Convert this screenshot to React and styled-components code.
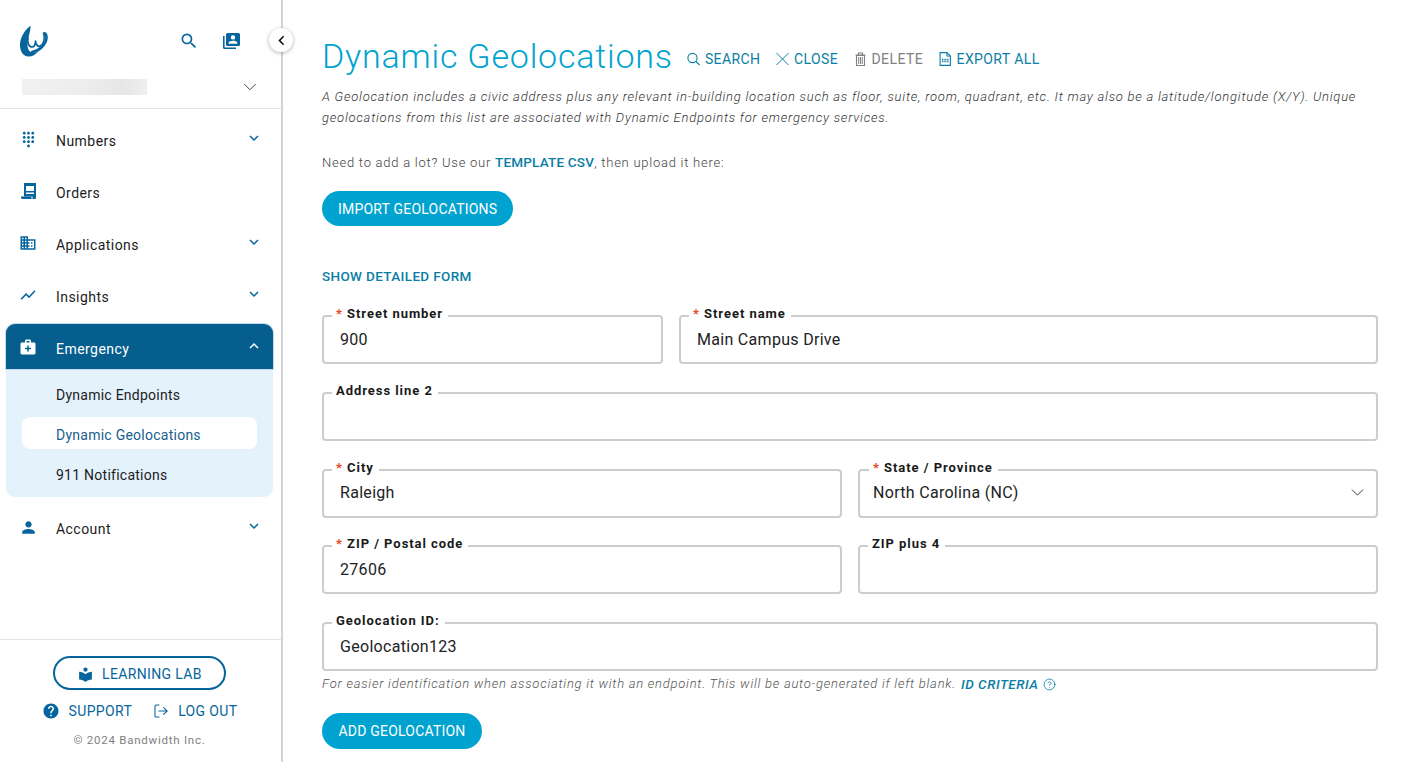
import styled, { createGlobalStyle } from 'styled-components';
import {
  MdSearch, MdDialpad, MdDomain, MdShowChart, MdMedicalServices, MdPerson,
  MdKeyboardArrowDown, MdKeyboardArrowUp, MdChevronLeft, MdHelp, MdLocalLibrary,
} from 'react-icons/md';
import { ChevronDown, LogOut, CircleHelp } from 'lucide-react';

const navy = '#06659c';
const teal = '#0a7ea4';
const sky = '#00a3d0';
const line = '#cdcdcd';

const GlobalStyle = createGlobalStyle`
  html, body { margin: 0; padding: 0; height: 100%; background: #fff; overflow: hidden; }
  body { font-family: Roboto, "Liberation Sans", sans-serif; color: #1c1c1c; }
  * { box-sizing: border-box; }
`;

const Page = styled.div`
  display: flex;
  width: 1416px;
  height: 762px;
`;

const Sidebar = styled.aside`
  position: relative;
  width: 283px;
  flex: none;
  height: 100%;
  display: flex;
  flex-direction: column;
  border-right: 2px solid #d4d4d4;
`;

const Brand = styled.div`
  height: 109px;
  flex: none;
  border-bottom: 1px solid #e4e4e4;
  padding: 24px 24px 0 20px;
`;

const BrandTop = styled.div`
  display: flex;
  align-items: center;
  height: 34px;
  color: ${navy};
`;

const BrandIcons = styled.div`
  margin-left: auto;
  margin-right: 17px;
  display: flex;
  align-items: center;
  gap: 24px;
`;

const AccountPicker = styled.div`
  display: flex;
  align-items: center;
  justify-content: space-between;
  margin: 21px -4px 0 2px;
  height: 16px;
  color: #333;
`;

const BlurredName = styled.div`
  width: 125px;
  height: 16px;
  background: linear-gradient(90deg, #f1f1f1, #ededed 50%, #e6e6e6 80%, #efefef);
  filter: blur(0.6px);
`;

const CollapseButton = styled.button`
  position: absolute;
  top: 28px;
  right: -12px;
  width: 24px;
  height: 24px;
  padding: 0;
  border: 0;
  border-radius: 50%;
  background: #fff;
  color: #111;
  box-shadow: 0 1px 4px rgba(0, 0, 0, 0.3);
  display: flex;
  align-items: center;
  justify-content: center;
  z-index: 2;
`;

const Nav = styled.nav`
  flex: 1;
  padding: 6px 8px 0 6px;
`;

const NavRow = styled.div`
  height: 52px;
  display: flex;
  align-items: center;
  padding: 0 10px 0 14px;
  font-size: 14px;
  letter-spacing: 0.45px;
  color: #1c1c1c;
  svg { color: ${navy}; flex: none; }
`;

const AccountRow = styled(NavRow)`
  margin-top: 6px;
`;

const NavIcon = styled.span`
  width: 16px;
  height: 16px;
  margin-right: 20px;
  margin-top: -4px;
  display: flex;
  align-items: center;
  justify-content: center;
`;

const NavChevron = styled.span`
  margin-left: auto;
  margin-top: -6px;
  display: flex;
`;

const EmergencyGroup = styled.div`
  margin-top: 1px;
  border-radius: 9px;
  background: #e4f2fc;
  height: 173px;
`;

const EmergencyHead = styled(NavRow)`
  height: 45px;
  background: #065e8f;
  color: #fff;
  padding-top: 5px;
  border-radius: 9px 9px 0 0;
  box-shadow: 0 0 0 1px #c5dceb;
  svg { color: #fff; }
`;

const SubList = styled.div`
  padding: 8px 16px 0;
  display: flex;
  flex-direction: column;
`;

const SubItem = styled.div`
  height: 32px;
  margin-bottom: 8px;
  padding: 4px 0 0 34px;
  display: flex;
  align-items: center;
  border-radius: 8px;
  font-size: 14px;
  letter-spacing: 0.25px;
  background: ${p => (p.$active ? '#fff' : 'transparent')};
  color: ${p => (p.$active ? '#19608e' : '#1c1c1c')};
`;

const SideFooter = styled.footer`
  flex: none;
  height: 123px;
  border-top: 1px solid #e4e4e4;
  display: flex;
  flex-direction: column;
  align-items: center;
  padding: 16px 2px 0 0;
`;

const LabButton = styled.div`
  width: 173px;
  height: 34px;
  padding-top: 2px;
  border: 2px solid ${navy};
  border-radius: 17px;
  color: ${navy};
  display: flex;
  align-items: center;
  justify-content: center;
  gap: 8px;
  font-size: 14px;
  letter-spacing: 0.35px;
`;

const FootLinks = styled.div`
  display: flex;
  align-items: center;
  gap: 21px;
  margin-top: 10px;
  height: 22px;
`;

const FootLink = styled.span`
  display: flex;
  align-items: center;
  gap: 9px;
  font-size: 14px;
  letter-spacing: 0.35px;
  color: ${navy};
`;

const Copyright = styled.div`
  margin-top: 11px;
  font-size: 11.5px;
  letter-spacing: 0.75px;
  color: #7f7f7f;
`;

const Main = styled.main`
  flex: 1;
  min-width: 0;
  padding: 32px 38px 0 39px;
`;

const TitleRow = styled.div`
  display: flex;
  align-items: center;
  height: 48px;
`;

const Title = styled.h1`
  margin: 0 14px 0 0;
  font-size: 34px;
  font-weight: 300;
  letter-spacing: 0.8px;
  color: ${sky};
  white-space: nowrap;
`;

const Action = styled.span`
  display: flex;
  align-items: center;
  gap: 5px;
  margin-right: 15.5px;
  margin-top: 6px;
  font-size: 14px;
  letter-spacing: 0.4px;
  color: ${p => (p.$muted ? '#808080' : teal)};
`;

const ActionIcon = styled.svg`
  width: 13px;
  height: 14px;
  flex: none;
  fill: none;
  stroke: currentColor;
`;

const Intro = styled.p`
  margin: 6px 0 0;
  font-size: 13px;
  line-height: 21px;
  font-style: italic;
  font-weight: 300;
  letter-spacing: 0.77px;
  color: #333;
`;

const Upload = styled.p`
  margin: 25px 0 0;
  font-size: 13px;
  line-height: 18px;
  font-weight: 300;
  letter-spacing: 0.75px;
  color: #444;
`;

const TextLink = styled.span`
  font-size: 13.5px;
  font-weight: 500;
  letter-spacing: 0.2px;
  color: ${teal};
`;

const PrimaryButton = styled.button`
  display: block;
  height: 35px;
  padding: 0 16px;
  border: 0;
  border-radius: 18px;
  background: #00a3d0;
  color: #fff;
  font-family: inherit;
  font-size: 14px;
  letter-spacing: 0.2px;
  white-space: nowrap;
`;

const ImportButton = styled(PrimaryButton)`
  margin-top: 19px;
`;

const DetailLink = styled.div`
  margin: 41px 0 0;
  font-size: 13.5px;
  font-weight: 500;
  letter-spacing: 0.35px;
  line-height: 18px;
  color: ${teal};
`;

const Form = styled.form`
  margin-top: 21px;
  display: flex;
  flex-direction: column;
  gap: 18.75px;
`;

const FormRow = styled.div`
  display: grid;
  grid-template-columns: ${p => p.$cols || '1fr'};
  gap: 16px;
`;

const Field = styled.fieldset`
  margin: 0;
  min-width: 0;
  height: 58px;
  padding: 0;
  border: 2px solid ${line};
  border-radius: 4px;
`;

const Legend = styled.legend`
  margin-left: ${p => (p.$select ? '9px' : '8px')};
  padding: 0 5px 4px 4px;
  font-size: 13px;
  font-weight: 700;
  letter-spacing: 0.95px;
  line-height: 16px;
  color: #1a1a1a;
  white-space: nowrap;
  &::before {
    content: ${p => (p.$required ? "'* '" : 'none')};
    color: #e8431f;
  }
`;

const FieldBody = styled.div`
  height: 26px;
  padding: 0 ${p => (p.$select ? '8.5px' : '16px')} 0 ${p => (p.$select ? '13px' : '16px')};
  display: flex;
  align-items: center;
  justify-content: space-between;
  font-size: 16px;
  letter-spacing: 0.3px;
  color: #222;
`;

const Hint = styled.p`
  margin: -13.75px 0 0;
  display: flex;
  align-items: center;
  gap: 4px;
  font-size: 13px;
  line-height: 16px;
  font-style: italic;
  font-weight: 300;
  letter-spacing: 0.75px;
  color: #555;
`;

const HintLink = styled.span`
  margin-left: 1px;
  font-size: 13.5px;
  font-weight: 500;
  letter-spacing: 0.5px;
  color: ${teal};
`;

const AddButton = styled(PrimaryButton)`
  height: 36px;
  margin-top: 2px;
  padding: 0 16.5px;
  align-self: flex-start;
`;

// bandwidth swirl
const Logo = () => (
  <svg width="28" height="33" viewBox="0 0 28 33" fill="none">
    <path d="M10 1C4 6 0 13 0 20c0 6 3 11.500 8.500 11.500 4 0 7-2 10-5-3 1.500-6 1.700-8 .5-3-2-3.500-7-2.500-12 .7-4 2.200-9 2.500-12 .1-1.500-.2-2.500-.5-2.500z" fill={navy} />
    <path d="M8 13c-1 5 1 9 4 9 2.500 0 3.500-3 3.500-6 .5 4 2.500 6 4.500 5 3-1.500 5-6 4-12" stroke={navy} strokeWidth="1.700" strokeLinecap="round" strokeLinejoin="round" />
    <path d="M12 27c7-1 14-7 14.500-14 .2-3-1-5-2.500-4.500" stroke={navy} strokeWidth="2.600" strokeLinecap="round" />
  </svg>
);

const ContactBook = () => (
  <svg width="17" height="17" viewBox="0 0 17 17" fill={navy}>
    <path d="M0 3h1.600v11.400H13V16H1.500A1.500 1.500 0 0 1 0 14.500z" />
    <path fillRule="evenodd" d="M4.500 0h11A1.500 1.500 0 0 1 17 1.500v10a1.500 1.500 0 0 1-1.500 1.500h-11A1.500 1.500 0 0 1 3 11.500v-10A1.500 1.500 0 0 1 4.500 0zM10 2.200a2.200 2.200 0 1 0 0 4.400 2.200 2.200 0 0 0 0-4.400zM5.600 10.800h8.800V9.900c0-1.500-2.900-2.200-4.400-2.200s-4.400.7-4.400 2.200z" />
  </svg>
);

const OrdersIcon = () => (
  <svg width="15" height="16" viewBox="0 0 15 16" fill={navy}>
    <path fillRule="evenodd" d="M3 0h12v15a1 1 0 0 1-1 1H11.500v-2.500H3zM5 3v5h8V3zM5 9.500V11h8V9.500z" />
    <path d="M0 13.500h10.500V16H1.500A1.500 1.500 0 0 1 0 14.500z" />
    <path d="M8.500 3.500h1V8h-1zM5 5h8v1H5z" fill="#fff" />
  </svg>
);

const SearchGlyph = () => (
  <ActionIcon viewBox="0 0 13 14">
    <circle cx="5.500" cy="6" r="4.600" strokeWidth="1.100" />
    <path d="M9 9.500l3.500 3.500" strokeWidth="1.100" />
  </ActionIcon>
);

const CloseGlyph = () => (
  <ActionIcon viewBox="0 0 13 14">
    <path d="M.5 1l12 12M12.500 1L.5 13" strokeWidth="1" />
  </ActionIcon>
);

const TrashGlyph = () => (
  <ActionIcon viewBox="0 0 13 14">
    <path d="M1.500 3h10M4.500 3V1h4v2" strokeWidth="1.100" />
    <path d="M2.500 3.500h8v10h-8z" strokeWidth="1.100" />
    <path d="M4.700 5v7M6.500 5v7M8.300 5v7" strokeWidth="1" />
  </ActionIcon>
);

const CsvGlyph = () => (
  <ActionIcon viewBox="0 0 13 14">
    <path d="M1.100.6h6.800l3.500 3.500v9.300H1.100z" strokeWidth="1.100" />
    <path d="M7.900.6v3.500h3.500" strokeWidth="1" />
    <path d="M3 9.500h7M3 7.500h7" strokeWidth="1.400" strokeDasharray="1 .6" />
  </ActionIcon>
);

function FormField({ label, value, required, select }) {
  return (
    <Field>
      <Legend $required={required} $select={select}>{label}</Legend>
      <FieldBody $select={select}>
        <span>{value}</span>
        {select && <ChevronDown size={21} strokeWidth={1} />}
      </FieldBody>
    </Field>
  );
}

const navItems = [
  { label: 'Numbers', icon: <MdDialpad size={17} />, more: true },
  { label: 'Orders', icon: <OrdersIcon /> },
  { label: 'Applications', icon: <MdDomain size={18} />, more: true },
  { label: 'Insights', icon: <MdShowChart size={18} />, more: true },
];

export default function App() {
  return (
    <>
      <GlobalStyle />
      <Page>
        <Sidebar>
          <Brand>
            <BrandTop>
              <Logo />
              <BrandIcons>
                <MdSearch size={20} />
                <ContactBook />
              </BrandIcons>
            </BrandTop>
            <AccountPicker>
              <BlurredName />
              <ChevronDown size={22} strokeWidth={1} />
            </AccountPicker>
          </Brand>
          <CollapseButton><MdChevronLeft size={19} /></CollapseButton>

          <Nav>
            {navItems.map(item => (
              <NavRow key={item.label}>
                <NavIcon>{item.icon}</NavIcon>
                {item.label}
                {item.more && <NavChevron><MdKeyboardArrowDown size={18} /></NavChevron>}
              </NavRow>
            ))}
            <EmergencyGroup>
              <EmergencyHead>
                <NavIcon><MdMedicalServices size={18} /></NavIcon>
                Emergency
                <NavChevron><MdKeyboardArrowUp size={18} /></NavChevron>
              </EmergencyHead>
              <SubList>
                <SubItem>Dynamic Endpoints</SubItem>
                <SubItem $active>Dynamic Geolocations</SubItem>
                <SubItem>911 Notifications</SubItem>
              </SubList>
            </EmergencyGroup>
            <AccountRow>
              <NavIcon><MdPerson size={19} /></NavIcon>
              Account
              <NavChevron><MdKeyboardArrowDown size={18} /></NavChevron>
            </AccountRow>
          </Nav>

          <SideFooter>
            <LabButton><MdLocalLibrary size={17} />LEARNING LAB</LabButton>
            <FootLinks>
              <FootLink><MdHelp size={18} />SUPPORT</FootLink>
              <FootLink><LogOut size={16} strokeWidth={1.6} />LOG OUT</FootLink>
            </FootLinks>
            <Copyright>© 2024 Bandwidth Inc.</Copyright>
          </SideFooter>
        </Sidebar>

        <Main>
          <TitleRow>
            <Title>Dynamic Geolocations</Title>
            <Action><SearchGlyph />SEARCH</Action>
            <Action><CloseGlyph />CLOSE</Action>
            <Action $muted><TrashGlyph />DELETE</Action>
            <Action><CsvGlyph />EXPORT ALL</Action>
          </TitleRow>

          <Intro>
            A Geolocation includes a civic address plus any relevant in-building location such as floor, suite, room, quadrant, etc. It may also be a latitude/longitude (X/Y). Unique geolocations from this list are associated with Dynamic Endpoints for emergency services.
          </Intro>
          <Upload>Need to add a lot? Use our <TextLink>TEMPLATE CSV</TextLink>, then upload it here:</Upload>
          <ImportButton type="button">IMPORT GEOLOCATIONS</ImportButton>

          <DetailLink>SHOW DETAILED FORM</DetailLink>

          <Form>
            <FormRow $cols="341px 1fr">
              <FormField required label="Street number" value="900" />
              <FormField required label="Street name" value="Main Campus Drive" />
            </FormRow>
            <FormField label="Address line 2" />
            <FormRow $cols="1fr 1fr">
              <FormField required label="City" value="Raleigh" />
              <FormField required select label="State / Province" value="North Carolina (NC)" />
            </FormRow>
            <FormRow $cols="1fr 1fr">
              <FormField required label="ZIP / Postal code" value="27606" />
              <FormField label="ZIP plus 4" />
            </FormRow>
            <FormField label="Geolocation ID:" value="Geolocation123" />
            <Hint>
              For easier identification when associating it with an endpoint. This will be auto-generated if left blank.
              <HintLink>ID CRITERIA</HintLink>
              <CircleHelp size={13} color={teal} strokeWidth={1.5} />
            </Hint>
            <AddButton type="button">ADD GEOLOCATION</AddButton>
          </Form>
        </Main>
      </Page>
    </>
  );
}
